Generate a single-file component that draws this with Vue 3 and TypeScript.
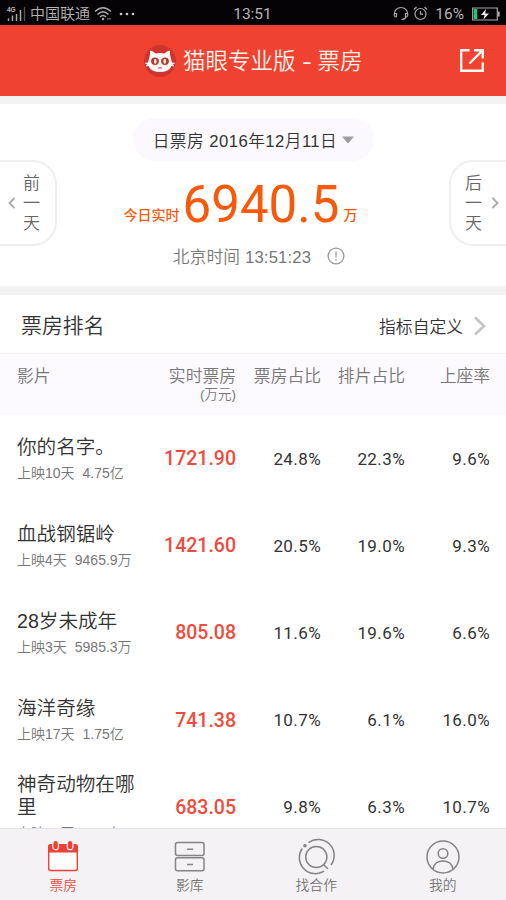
<script setup lang="ts">
interface Movie {
  name: string
  days: string
  total: string
  office: string
  share: string
  screens: string
  seats: string
}

const movies: Movie[] = [
  { name: '你的名字。', days: '上映10天', total: '4.75亿', office: '1721.90', share: '24.8%', screens: '22.3%', seats: '9.6%' },
  { name: '血战钢锯岭', days: '上映4天', total: '9465.9万', office: '1421.60', share: '20.5%', screens: '19.0%', seats: '9.3%' },
  { name: '28岁未成年', days: '上映3天', total: '5985.3万', office: '805.08', share: '11.6%', screens: '19.6%', seats: '6.6%' },
  { name: '海洋奇缘', days: '上映17天', total: '1.75亿', office: '741.38', share: '10.7%', screens: '6.1%', seats: '16.0%' },
  { name: '神奇动物在哪里', days: '上映17天', total: '5.68亿', office: '683.05', share: '9.8%', screens: '6.3%', seats: '10.7%' },
]
</script>

<template>
  <div class="app">
    <div class="status">
      <div class="status-left">
        <svg class="signal" width="20" height="16" viewBox="0 0 20 16">
          <text x="0" y="6" font-size="6.5" font-weight="700" fill="#bbb">4G</text>
          <path d="M1.500 12.500v2.500M5.500 9.500v5.500M9.500 8v7M13.500 4v11" stroke="#aaa" stroke-width="1.500" />
          <path d="M17.500 1v14" stroke="#555" stroke-width="1.300" />
        </svg>
        <span class="carrier">中国联通</span>
        <svg class="wifi" width="18" height="15" viewBox="0 0 18 15" fill="none" stroke="#aaa" stroke-width="1.400">
          <path d="M1 5.500Q9-2 17 5.500M3.500 8.500Q9 3 14.500 8.500M6 11Q9 8 12 11" />
          <circle cx="9" cy="13" r="1.200" fill="#aaa" stroke="none" />
          <path d="M13.500 12.800h3" stroke-dasharray="1 1" />
        </svg>
        <svg class="dots" width="17" height="4" viewBox="0 0 17 4" fill="#ccc">
          <circle cx="2" cy="2" r="1.300" /><circle cx="8" cy="2" r="1.300" /><circle cx="14" cy="2" r="1.300" />
        </svg>
      </div>
      <span class="clock">13:51</span>
      <div class="status-right">
        <svg width="16" height="15" viewBox="0 0 16 15" fill="none" stroke="#aaa" stroke-width="1.200">
          <path d="M3.500 11V7.500H1.300V9.500Q1.500 11 3.500 11M12.500 11V7.500h2.200V9.500Q14.500 11 12.500 11M1.300 8A6.700 6.500 0 0 1 14.700 8M13 11Q12 13.500 8.500 13.500" />
        </svg>
        <svg width="15" height="15" viewBox="0 0 15 15" fill="none" stroke="#aaa" stroke-width="1.200">
          <circle cx="7.500" cy="8" r="5.500" /><path d="M7.500 5v3.200H10M1 3.500L3.500 1M11.500 1L14 3.500" />
        </svg>
        <span class="percent">16%</span>
        <svg width="28" height="14" viewBox="0 0 28 14">
          <path d="M.7 1h24.600v12H.7z" fill="none" stroke="#aaa" stroke-width="1.200" />
          <path d="M1.800 2h3.400v10H1.800z" fill="#18c981" />
          <path d="M26 4.500h1.700v5H26z" fill="#aaa" />
          <path d="M14 2L9 8h3.500l-1 4.500L17 6.500h-3.800z" fill="#eee" />
        </svg>
      </div>
    </div>

    <header class="header">
      <svg class="logo" width="32" height="32" viewBox="0 0 32 32">
        <circle cx="16" cy="16" r="16" fill="#cf3530" />
        <path d="M6 5.500Q9 6 11.500 8.500Q16 7.500 20.500 8.500Q23 6 26 5.500Q25.500 9 26.500 12L28 17.500L31.500 18L29 19.200L30.500 21.500L27.500 21Q25 27 16 27T4.500 21L1.500 21.500L3 19.200L.5 18L4 17.500L5.500 12Q6.500 9 6 5.500z" fill="#fff8f2" />
        <ellipse cx="11" cy="16.300" rx="3.900" ry="3.700" fill="#b03a34" /><ellipse cx="21" cy="16.300" rx="3.900" ry="3.700" fill="#b03a34" />
        <ellipse cx="11.300" cy="16.300" rx="1.300" ry="2.500" fill="#ffe9df" /><ellipse cx="20.700" cy="16.300" rx="1.300" ry="2.500" fill="#ffe9df" />
        <path d="M14 23Q15.500 24 16 22Q16.500 24 18 23" fill="none" stroke="#c65048" stroke-width="1" />
      </svg>
      <h1>猫眼专业版 <i>-</i> 票房</h1>
      <svg class="share" width="26" height="26" viewBox="0 0 26 26" fill="none" stroke="#fff6ef" stroke-width="2.400">
        <path d="M10.500 2.200H2.200v20.600h21.600V14.500M15 2.200h8.800v8.300M23.300 2.700L10.500 15.500" />
      </svg>
    </header>

    <section class="summary">
      <button class="day prev">
        <svg width="8" height="12" viewBox="0 0 8 12"><path d="M6.500 1L1.500 6l5 5" /></svg>
        <span>前<br>一<br>天</span>
      </button>
      <div class="center">
        <div class="date">
          <span>日票房 2016年12月11日</span>
          <svg width="12" height="8" viewBox="0 0 12 8"><path d="M0 .5h12L6 7.500z" fill="#9d9b9f" /></svg>
        </div>
        <div class="amount"><b>今日实时</b><strong>6940.5</strong><b>万</b></div>
        <div class="time">
          <span>北京时间 13:51:23</span>
          <svg width="18" height="18" viewBox="0 0 18 18" fill="none" stroke="#999" stroke-width="1.300">
            <circle cx="9" cy="9" r="7.900" /><path d="M9 4.500v6M9 12v1.500" />
          </svg>
        </div>
      </div>
      <button class="day next">
        <span>后<br>一<br>天</span>
        <svg width="8" height="12" viewBox="0 0 8 12"><path d="M1.500 1l5 5-5 5" /></svg>
      </button>
    </section>

    <section class="ranking">
      <div class="rank-title">
        <h2>票房排名</h2>
        <div class="custom">
          <span>指标自定义</span>
          <svg width="13" height="20" viewBox="0 0 13 20"><path d="M2 1.500L11 10l-9 8.500" fill="none" stroke="#c4c4c6" stroke-width="2.600" /></svg>
        </div>
      </div>
      <div class="row head">
        <span class="film">影片</span>
        <span>实时票房<small>(万元)</small></span>
        <span>票房占比</span>
        <span>排片占比</span>
        <span>上座率</span>
      </div>
      <div v-for="m in movies" :key="m.name" class="row movie">
        <div class="film">
          <div class="name">{{ m.name }}</div>
          <div class="sub"><span>{{ m.days }}</span><span>{{ m.total }}</span></div>
        </div>
        <span class="office">{{ m.office }}</span>
        <span class="rate">{{ m.share }}</span>
        <span class="rate">{{ m.screens }}</span>
        <span class="rate">{{ m.seats }}</span>
      </div>
    </section>

    <nav class="tabs">
      <a class="tab active">
        <svg width="34" height="34" viewBox="0 0 34 34">
          <path d="M2.700 11h28.600v17.500a2 2 0 0 1-2 2H4.700a2 2 0 0 1-2-2z" fill="#fff" stroke="#ee4135" stroke-width="1.400" />
          <path d="M2 12.500V6.500a2.500 2.500 0 0 1 2.500-2.500h25A2.500 2.500 0 0 1 32 6.500v6z" fill="#ee4135" />
          <g fill="#ee4135" stroke="#f4f2f5" stroke-width="1.200"><rect x="6.800" y=".5" width="5.600" height="9.200" rx="2.800" /><rect x="21.300" y=".5" width="5.600" height="9.200" rx="2.800" /></g>
        </svg>
        <span>票房</span>
      </a>
      <a class="tab">
        <svg width="34" height="34" viewBox="0 0 34 34" fill="none" stroke="#858386" stroke-width="1.500">
          <rect x="2.500" y="2.500" width="28.500" height="13" rx="2" /><rect x="2.500" y="17.800" width="28.500" height="13" rx="2" /><path d="M14 9.200h6M14 24.500h6" />
        </svg>
        <span>影库</span>
      </a>
      <a class="tab">
        <svg width="34" height="34" viewBox="0 0 34 34" fill="none" stroke="#858386" stroke-width="1.500">
          <circle cx="17.300" cy="17" r="10.600" /><path d="M24.500 24.500l4.500 4.500M9.500 2.700A16 16 0 0 1 32 25M25 31.200A16 16 0 0 1 3.300 8.500" />
          <circle cx="6" cy="5.700" r="1.800" fill="#858386" stroke="none" />
        </svg>
        <span>找合作</span>
      </a>
      <a class="tab">
        <svg width="34" height="34" viewBox="0 0 34 34" fill="none" stroke="#858386" stroke-width="1.500">
          <circle cx="17" cy="17" r="16" /><circle cx="17" cy="13.500" r="4.800" /><path d="M7 29.500C7.500 18 26.500 18 27 29.500" />
        </svg>
        <span>我的</span>
      </a>
    </nav>
  </div>
</template>

<style>
body {
  margin: 0;
  overflow: hidden;
}
</style>

<style scoped>
.app {
  display: flex;
  flex-direction: column;
  width: 506px;
  height: 900px;
  overflow: hidden;
  background: #f3f3f3;
  color: #333;
  font-family: "Liberation Sans", "Noto Sans CJK SC", sans-serif;
  font-weight: 350;
}
svg { display: block; flex: none; overflow: visible; }
h1, h2 { margin: 0; font-weight: inherit; }

.status {
  display: grid;
  grid-template-columns: 1fr auto 1fr;
  align-items: center;
  flex: none;
  height: 25px;
  padding: 1px 6px 0 7px;
  box-sizing: border-box;
  background: #050305;
  color: #b4b4b4;
  font-size: 15px;
  line-height: 24px;
}
.status-left, .status-right { display: flex; align-items: center; }
.carrier { margin-left: 3px; white-space: nowrap; }
.wifi { margin-left: 4px; }
.dots { margin-left: 7px; }
.clock, .percent { font-family: Roboto, sans-serif; font-weight: 400; font-size: 15.500px; }
.clock { margin-right: 2px; padding-top: 1px; }
.status-right { justify-content: flex-end; gap: 4px; }
.percent { margin: 0 4px 0 3px; padding-top: 1px; }

.header {
  display: flex;
  align-items: center;
  flex: none;
  height: 71px;
  padding: 0 21px 0 144px;
  box-sizing: border-box;
  background: #f04230;
  color: #fff4eb;
}
.header h1 { margin-left: 7px; padding-top: 2px; font-size: 22.500px; line-height: 34px; white-space: nowrap; }
.header i { display: inline-block; margin: 0 1px; transform: scaleX(1.300); font-style: normal; }
.share { margin-left: auto; }

.summary {
  display: flex;
  justify-content: space-between;
  flex: none;
  height: 182px;
  margin-top: 8px;
  background: #fff;
}
.day {
  display: flex;
  align-items: center;
  width: 57px;
  height: 86px;
  margin: 56px 0 0;
  padding: 2px 0 0;
  box-sizing: border-box;
  border: 2px solid #eeeff0;
  background: #fff;
  color: #666;
  font: inherit;
  font-size: 17px;
  line-height: 20px;
}
.day svg { margin-top: -2px; }
.day path { fill: none; stroke: #aaa; stroke-width: 1.800; }
.prev { border-left: 0; border-radius: 0 24px 24px 0; padding-left: 8px; gap: 7px; }
.next { border-right: 0; border-radius: 24px 0 0 24px; padding-left: 14px; gap: 9px; }

.center { display: flex; flex-direction: column; align-items: center; }
.date {
  display: flex;
  align-items: center;
  justify-content: center;
  gap: 5px;
  width: 241px;
  height: 43px;
  margin-top: 14px;
  margin-left: 1px;
  box-sizing: border-box;
  border-radius: 22px;
  background: #fbf9fd;
  font-size: 16.700px;
  letter-spacing: 0.450px;
  white-space: nowrap;
}
.amount {
  display: flex;
  align-items: baseline;
  height: 62px;
  margin-top: 13px;
  margin-right: 25px;
  color: #f8590b;
  line-height: 62px;
}
.amount b { font-size: 14px; font-weight: 500; position: relative; top: -2px; }
.amount strong {
  margin: 0 4px 0 3px;
  font-family: Roboto, sans-serif;
  font-size: 51px;
  font-weight: 400;
}
.time {
  display: flex;
  align-items: center;
  gap: 16px;
  height: 24px;
  margin-top: 8px;
  margin-left: 12px;
  color: #777;
  font-size: 16.700px;
  letter-spacing: 0.150px;
}

.ranking { flex: 1; min-height: 0; margin-top: 9px; overflow: hidden; background: #fff; }
.rank-title {
  display: flex;
  align-items: center;
  justify-content: space-between;
  height: 58px;
  padding: 3px 20px 0 21px;
  box-sizing: border-box;
}
.rank-title h2 { padding-top: 1px; font-size: 20.900px; line-height: 30px; }
.custom { display: flex; align-items: center; gap: 10px; font-size: 16.800px; }
.row {
  display: grid;
  grid-template-columns: 123px 96px 85px 84px 85px;
  padding-left: 17px;
  text-align: right;
}
.row .film { text-align: left; }
.head {
  height: 62px;
  padding-top: 11px;
  box-sizing: border-box;
  border-top: 1px solid #f2f1f5;
  background: #fcfafe;
  color: #777;
  font-size: 16.800px;
  line-height: 24px;
}
.head small { display: block; margin-top: -2px; font-size: 13.500px; line-height: 16px; }
.movie { align-items: center; height: 87.200px; }
.rate { font-family: Roboto, sans-serif; font-size: 17px; font-weight: 400; letter-spacing: 0.400px; }
.name { padding-top: 1px; font-size: 19.600px; line-height: 23px; }
.sub { display: flex; gap: 8px; margin-top: 4px; color: #777; font-size: 14px; line-height: 20px; }
.office {
  color: #f04b3d;
  font-family: Roboto, sans-serif;
  font-size: 19.500px;
  font-weight: 500;
}

.tabs {
  display: flex;
  flex: none;
  height: 72px;
  box-sizing: border-box;
  border-top: 1px solid #e3e2e4;
  background: #f4f2f5;
}
.tab {
  display: flex;
  flex: 1;
  flex-direction: column;
  align-items: center;
  gap: 2px;
  padding-top: 11px;
  color: #777;
  font-size: 13.800px;
  line-height: 20px;
}
.active { color: #e84c40; }
</style>
